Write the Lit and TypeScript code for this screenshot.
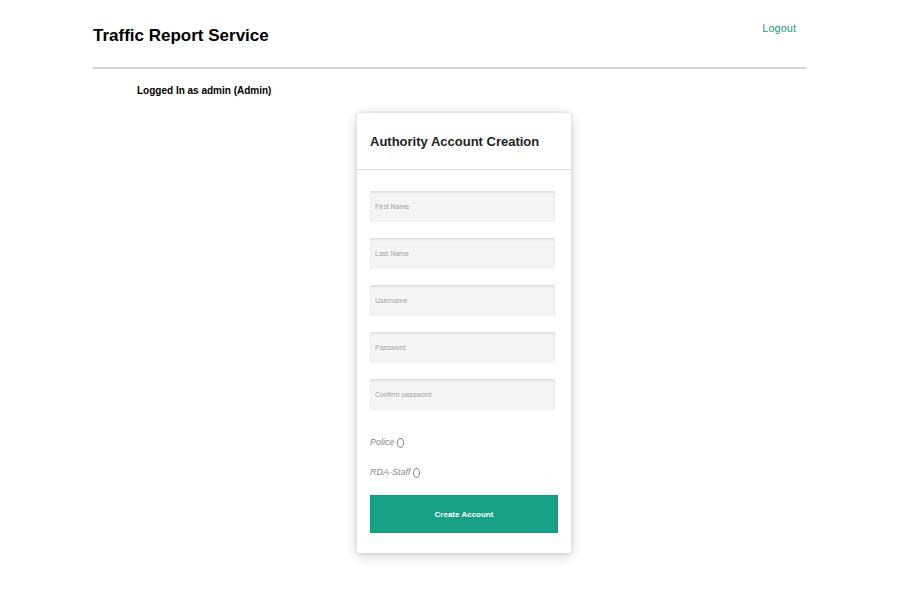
import { LitElement, html, css } from "lit";
import { customElement } from "lit/decorators.js";

interface Field {
  name: string;
  label: string;
  type: string;
}

const FIELDS: Field[] = [
  { name: "first-name", label: "First Name", type: "text" },
  { name: "last-name", label: "Last Name", type: "text" },
  { name: "username", label: "Username", type: "text" },
  { name: "password", label: "Password", type: "password" },
  { name: "confirm", label: "Confirm password", type: "password" },
];

const ROLES = ["Police", "RDA-Staff"];

@customElement("account-form")
export class AccountForm extends LitElement {
  static styles = css`
    :host {
      display: block;
      width: 214px;
      max-width: 100%;
      box-sizing: border-box;
      background: #fff;
      border-radius: 3px;
      box-shadow: 0 0 0 2px rgba(0, 0, 0, 0.04), 0 3px 14px rgba(0, 0, 0, 0.18);
    }
    .heading {
      margin: 0;
      padding: 2px 13px 0;
      font-size: 13px;
      line-height: 54px;
      font-weight: bold;
      color: #222;
      border-bottom: 1px solid #e2e2e2;
      white-space: nowrap;
    }
    .form {
      padding: 21px 13px 20px;
    }
    .fields {
      display: grid;
      gap: 16px;
      margin-right: 3px;
    }
    .input {
      box-sizing: border-box;
      width: 100%;
      height: 31px;
      padding: 0 5px;
      border: 0;
      border-radius: 2px;
      background: #f4f4f4;
      box-shadow: inset 0 2px 2px rgba(0, 0, 0, 0.08), inset 0 0 1px rgba(0, 0, 0, 0.08);
      font: inherit;
      font-size: 7px;
      color: #555;
    }
    .input::placeholder {
      color: #a2a2a2;
      opacity: 1;
    }
    .roles {
      display: grid;
      margin: 17px 0 8px;
      padding: 0;
      border: 0;
    }
    .role {
      display: flex;
      align-items: center;
      gap: 2px;
      height: 30px;
      font-size: 9px;
      font-style: italic;
      color: #888;
    }
    .radio {
      appearance: none;
      box-sizing: border-box;
      width: 7px;
      height: 10px;
      margin: 2px 0 0;
      border: 1px solid #858585;
      border-radius: 50%;
      background: #fff;
    }
    .radio:checked {
      background: #16a085;
    }
    .submit {
      display: block;
      width: 100%;
      height: 38px;
      padding: 0;
      border: 1px solid #149b7f;
      background: #16a085;
      color: #fff;
      font: inherit;
      font-size: 8px;
      font-weight: bold;
      cursor: pointer;
    }
  `;

  render() {
    return html`
      <h2 class="heading">Authority Account Creation</h2>
      <form class="form" @submit=${(e: Event) => e.preventDefault()}>
        <div class="fields">
          ${FIELDS.map(
            (f) => html`<input class="input" type=${f.type} name=${f.name}
              placeholder=${f.label} aria-label=${f.label} />`
          )}
        </div>
        <fieldset class="roles">
          ${ROLES.map(
            (r) => html`<label class="role"><span>${r}</span><input class="radio" type="radio" name="role" value=${r} /></label>`
          )}
        </fieldset>
        <button class="submit" type="submit">Create Account</button>
      </form>
    `;
  }
}

@customElement("app-root")
export class AppRoot extends LitElement {
  static styles = css`
    :host {
      display: block;
      min-height: 100vh;
      box-sizing: border-box;
      padding-bottom: 24px;
      background: #fff;
      color: #000;
      font-family: "Liberation Sans", Arial, sans-serif;
    }
    .header {
      display: flex;
      justify-content: space-between;
      align-items: flex-start;
      margin: 0 94px 0 93px;
      padding: 18px 10px 14px 0;
      border-bottom: 2px solid #d3d3d3;
    }
    .title {
      margin: 0;
      font-size: 17px;
      line-height: 35px;
      font-weight: bold;
    }
    .logout {
      font-size: 11px;
      line-height: 20px;
      color: #16a085;
      text-decoration: none;
    }
    .status {
      margin: 0;
      padding: 12px 137px 0;
      font-size: 10px;
      line-height: 20px;
      font-weight: bold;
    }
    .main {
      display: flex;
      justify-content: center;
      padding: 12px 0 0 28px;
    }
  `;

  render() {
    return html`
      <header class="header">
        <h1 class="title">Traffic Report Service</h1>
        <a class="logout" href="#logout">Logout</a>
      </header>
      <p class="status">Logged In as admin (Admin)</p>
      <main class="main"><account-form></account-form></main>
    `;
  }
}
